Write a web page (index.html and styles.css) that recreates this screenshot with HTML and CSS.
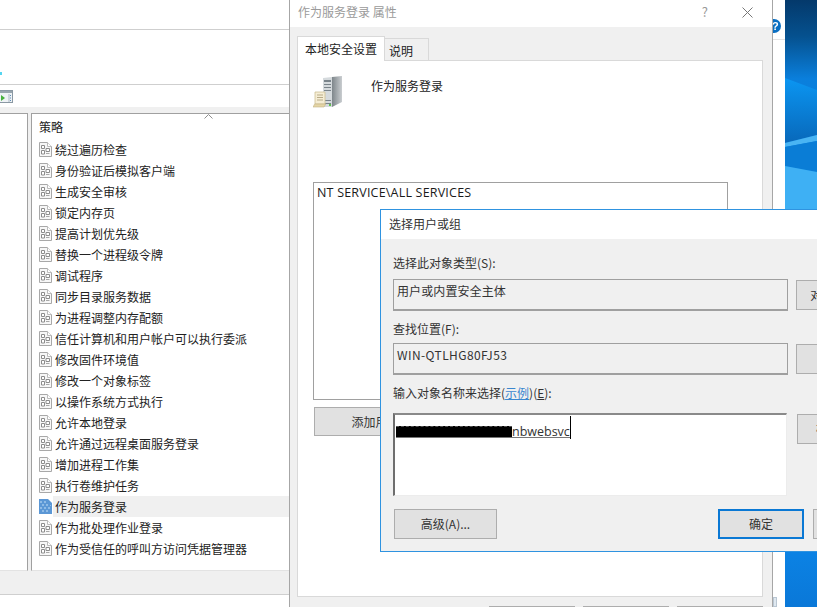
FILE: index.html
```html
<!DOCTYPE html>
<html lang="zh-CN">
<head>
<meta charset="utf-8">
<title>作为服务登录 属性</title>
<link rel="stylesheet" href="styles.css">
</head>
<body>
<svg class="defs" width="0" height="0" aria-hidden="true">
  <symbol id="policy" viewBox="0 0 13 15">
    <path d="M.5.5h8l4 4v10H.5z" fill="#f7f7f7" stroke="#a8a8a8"/>
    <path d="M8.5.5v4h4" fill="#fff" stroke="#bbb"/>
    <path d="M2.5 3.5h3v3h-3zM7 6.5h3.5v3H7zM2.5 8.5h3v3.500h-3z" fill="#fff" stroke="#8c8c8c"/>
    <path d="M7 11.500h3.500" stroke="#a8a8a8"/>
  </symbol>
</svg>

<div class="desktop">
  <svg class="wallpaper" viewBox="0 0 32 607" preserveAspectRatio="none" aria-hidden="true">
    <defs>
      <linearGradient id="wp" x1="0" y1="0" x2="0" y2="1">
        <stop offset="0" stop-color="#04396b"/>
        <stop offset=".06" stop-color="#05518f"/>
        <stop offset=".13" stop-color="#0a7fdc"/>
        <stop offset=".4" stop-color="#0a86e6"/>
        <stop offset=".91" stop-color="#0b82e4"/>
        <stop offset="1" stop-color="#0a78d8"/>
      </linearGradient>
      <linearGradient id="ray" x1="0" y1="0" x2="0" y2="1">
        <stop offset="0" stop-color="#0b96f2"/>
        <stop offset="1" stop-color="#0868ba"/>
      </linearGradient>
    </defs>
    <rect width="32" height="607" fill="url(#wp)"/>
    <path d="M0 78L32 90V135L0 143Z" fill="url(#ray)"/>
    <path d="M0 143L32 135V141L0 147Z" fill="#49b4f3"/>
    <path d="M0 147L32 141V172L0 166Z" fill="#0a7dd6"/>
    <path d="M0 166L32 172V209H0Z" fill="#3eb0f4"/>
  </svg>
</div>

<section class="console">
  <div class="console-top"></div>
  <div class="console-nav"><span class="nav-mark"></span></div>
  <div class="console-toolbar">
    <svg class="tool-icon" viewBox="0 0 13 13" aria-hidden="true">
      <rect x="-1" y=".5" width="13.500" height="12" fill="#eef2f5" stroke="#8a98a3"/>
      <rect x="0" y="1" width="12" height="2" fill="#98a5ae"/>
      <path d="M1 5l4 3-4 3z" fill="#45b03c"/>
      <path d="M9 4v8" stroke="#aab8c4"/>
      <path d="M10.500 5v1M10.500 7.500v1M10.500 10v1" stroke="#5f8fb8"/>
    </svg>
  </div>
  <div class="console-panes">
    <div class="tree-pane"></div>
    <div class="list-pane">
      <div class="list-head">
        <span>策略</span>
        <svg class="sort" viewBox="0 0 9 5" aria-hidden="true"><path d="M.5 4.500l4-4 4 4" fill="none" stroke="#8e8e8e"/></svg>
      </div>
      <ul class="policies">
        <li><svg class="pi"><use href="#policy"/></svg>绕过遍历检查</li>
        <li><svg class="pi"><use href="#policy"/></svg>身份验证后模拟客户端</li>
        <li><svg class="pi"><use href="#policy"/></svg>生成安全审核</li>
        <li><svg class="pi"><use href="#policy"/></svg>锁定内存页</li>
        <li><svg class="pi"><use href="#policy"/></svg>提高计划优先级</li>
        <li><svg class="pi"><use href="#policy"/></svg>替换一个进程级令牌</li>
        <li><svg class="pi"><use href="#policy"/></svg>调试程序</li>
        <li><svg class="pi"><use href="#policy"/></svg>同步目录服务数据</li>
        <li><svg class="pi"><use href="#policy"/></svg>为进程调整内存配额</li>
        <li><svg class="pi"><use href="#policy"/></svg>信任计算机和用户帐户可以执行委派</li>
        <li><svg class="pi"><use href="#policy"/></svg>修改固件环境值</li>
        <li><svg class="pi"><use href="#policy"/></svg>修改一个对象标签</li>
        <li><svg class="pi"><use href="#policy"/></svg>以操作系统方式执行</li>
        <li><svg class="pi"><use href="#policy"/></svg>允许本地登录</li>
        <li><svg class="pi"><use href="#policy"/></svg>允许通过远程桌面服务登录</li>
        <li><svg class="pi"><use href="#policy"/></svg>增加进程工作集</li>
        <li><svg class="pi"><use href="#policy"/></svg>执行卷维护任务</li>
        <li class="selected"><svg class="pi" viewBox="0 0 13 15" aria-hidden="true"><path d="M0 0h9l4 4v11H0z" fill="#5b97d5"/><path d="M1 2h2v2H1zM5 2h2v2H5zM3 5h2v2H3zM7 5h2v2H7zM11 6h1v1h-1zM1 8h2v2H1zM5 8h2v2H5zM9 8h2v2H9zM3 11h2v2H3zM7 11h2v2H7z" fill="#8fbbe6"/></svg>作为服务登录</li>
        <li><svg class="pi"><use href="#policy"/></svg>作为批处理作业登录</li>
        <li><svg class="pi"><use href="#policy"/></svg>作为受信任的呼叫方访问凭据管理器</li>
      </ul>
    </div>
  </div>
  <div class="console-status"></div>
</section>

<section class="backstrip">
  <span class="help-badge">?</span>
  <span class="strip-line"></span>
  <span class="strip-mark"></span>
</section>

<section class="props">
  <header class="props-title">
    <span>作为服务登录 属性</span>
    <span class="props-controls">
      <span class="qmark">?</span>
      <svg class="close" viewBox="0 0 11 11" aria-hidden="true"><path d="M.5.5l10 10M10.500.5l-10 10" stroke="#777" fill="none"/></svg>
    </span>
  </header>
  <div class="props-body">
    <div class="tabs">
      <span class="tab tab-active">本地安全设置</span>
      <span class="tab">说明</span>
    </div>
    <div class="tab-pane">
      <div class="policy-head">
        <svg class="server" viewBox="0 0 30 32" aria-hidden="true">
          <defs>
            <linearGradient id="srv" x1="0" x2="1"><stop offset="0" stop-color="#7e868b"/><stop offset="1" stop-color="#c9cdd0"/></linearGradient>
          </defs>
          <path d="M10 2l9-1v30h-9z" fill="#d5dadd"/>
          <path d="M19 1l10-1v26l-10 5z" fill="url(#srv)"/>
          <path d="M11 4h7v2h-7zM11 8h7v1h-7zM11 11h7v1h-7zM11 14h7v1h-7zM12 24h6v1h-6zM12 27h6v1h-6z" fill="#7a848b"/>
          <rect x="16" y="28" width="2" height="2" fill="#5ec14b"/>
          <path d="M2 16h10v12H2z" fill="#f5edd4" stroke="#cdbf96" stroke-width=".8"/>
          <path d="M4 19h6M4 21.500h6M4 24h6" stroke="#b8ab88"/>
          <path d="M0 31c1-1 1-3 2-3h11c-1 0-1 2-2 3z" fill="#e4d5a6" stroke="#c3b283" stroke-width=".6"/>
        </svg>
        <span class="policy-name">作为服务登录</span>
      </div>
      <div class="accounts">NT SERVICE\ALL SERVICES</div>
      <div class="btn add-btn">添加用户或组(U)...</div>
    </div>
    <div class="props-buttons">
      <span class="btn"></span><span class="btn"></span><span class="btn"></span>
    </div>
  </div>
</section>

<section class="picker">
  <header class="picker-title">选择用户或组</header>
  <div class="picker-body">
    <label class="lbl lbl-first">选择此对象类型(S):</label>
    <div class="row">
      <div class="field">用户或内置安全主体</div>
      <div class="btn side-btn">对象类型(T)...</div>
    </div>
    <label class="lbl">查找位置(F):</label>
    <div class="row row-second">
      <div class="field">WIN-QTLHG80FJ53</div>
      <div class="btn side-btn">位置(L)...</div>
    </div>
    <label class="lbl lbl-input">输入对象名称来选择(<a class="sample">示例</a>)(<u>E</u>):</label>
    <div class="row row-input">
      <div class="name-input">
        <span class="redacted"></span><span class="typed">nbwebsvc</span><span class="caret"></span>
      </div>
      <div class="btn side-btn">检查名称(C)</div>
    </div>
    <div class="row row-foot">
      <div class="btn adv-btn">高级(A)...</div>
      <div class="btn ok-btn">确定</div>
      <div class="btn cancel-btn">取消</div>
    </div>
  </div>
</section>
</body>
</html>
```

FILE: styles.css
```css
* { box-sizing: border-box; }
html, body { margin: 0; padding: 0; }
body {
  position: relative;
  width: 817px;
  height: 607px;
  overflow: hidden;
  background: #fff;
  color: #222;
  font: 12px/16px "Noto Sans CJK SC", "Noto Sans", sans-serif;
  filter: blur(.35px);
}
.defs { position: absolute; }

.desktop { position: absolute; left: 785px; top: 0; width: 32px; height: 607px; }
.wallpaper { display: block; width: 100%; height: 100%; }

/* console window */
.console {
  position: absolute; left: 0; top: 0; width: 290px; height: 607px;
  display: flex; flex-direction: column;
  background: #fff;
  border-right: 1px solid #a6a6a6;
}
.console-top { height: 30px; border-bottom: 1px solid #cfcfcf; flex: none; }
.console-nav { height: 55px; border-bottom: 1px solid #cfcfcf; flex: none; position: relative; }
.nav-mark { position: absolute; left: 0; top: 42px; width: 2px; height: 3px; background: #55d5f0; }
.console-toolbar { height: 22px; flex: none; display: flex; align-items: center; padding-top: 1px; }
.tool-icon { width: 13px; height: 13px; }
.console-panes {
  flex: none; height: 464px; display: flex; gap: 3px;
  background: #f0f0f0; padding-top: 6px;
}
.tree-pane {
  width: 28px; background: #fff;
  border-top: 1px solid #a0a0a0; border-right: 1px solid #a0a0a0;
  border-bottom: 1px solid #e3e3e3;
}
.list-pane {
  flex: 1; background: #fff;
  border-top: 1px solid #a0a0a0; border-left: 1px solid #a0a0a0;
  border-bottom: 1px solid #e3e3e3;
}
.list-head {
  position: relative; height: 25px; padding: 5px 0 0 7px;
  font-size: 12px; color: #222;
}
.sort { position: absolute; left: 172px; top: 0; width: 9px; height: 5px; }
.policies { list-style: none; margin: 0; padding: 0; }
.policies li {
  height: 21px; display: flex; align-items: center;
  padding-left: 7px; color: #222; white-space: nowrap;
}
.pi { width: 13px; height: 15px; margin-right: 3px; flex: none; }
.policies .selected { background: linear-gradient(#f0f0f0, #f0f0f0) 21px 0 no-repeat; }
.console-status { flex: none; height: 24px; background: #f0f0f0; border-bottom: 1px solid #cfcfcf; }

/* piece of window behind */
.backstrip { position: absolute; left: 772px; top: 0; width: 13px; height: 607px; background: #fff; }
.help-badge {
  position: absolute; left: 0; top: 19px; width: 9px; height: 14px;
  border-radius: 0 7px 7px 0; background: #0a6fc2; color: #fff;
  font: bold 11px/14px "Liberation Sans", sans-serif;
}
.strip-line { position: absolute; left: 0; right: 0; top: 39px; height: 1px; background: #e4e4e4; }
.strip-mark {
  position: absolute; left: 1px; top: 597px; width: 4px; height: 10px;
  background: #dfe8f0; border: 1px solid #b9c6d2;
}

/* properties dialog */
.props {
  position: absolute; left: 290px; top: 0; width: 483px; height: 607px;
  border-right: 1px solid #a6a6a6; background: #f0f0f0;
  display: flex; flex-direction: column;
}
.props-title {
  height: 27px; flex: none; background: #fff; color: #9a9a9a;
  display: flex; justify-content: space-between; align-items: center;
  padding: 0 19px 3px 8px;
}
.props-controls { display: flex; align-items: center; gap: 34px; }
.qmark { color: #999; font-size: 13px; }
.close { width: 11px; height: 11px; display: block; }
.props-body { flex: 1; padding: 9px 9px 0 7px; }
.tabs { display: flex; align-items: flex-end; height: 25px; position: relative; z-index: 1; margin-bottom: -1px; }
.tab {
  height: 23px; width: 44px; padding: 2px 0 0 4px; background: #f0f0f0;
  border: 1px solid #d9d9d9; border-left: 0; color: #222; line-height: 20px;
}
.tabs .tab-active {
  height: 25px; width: 88px; background: #fff; border: 1px solid #d9d9d9; border-bottom: 0;
  padding: 1px 0 0 7px; line-height: 22px;
}
.tab-pane {
  height: 537px; background: #fff; border: 1px solid #d9d9d9;
  padding: 0 15px; display: flex; flex-direction: column;
}
.policy-head { height: 121px; display: flex; align-items: flex-start; padding-top: 15px; }
.server { width: 30px; height: 32px; margin-right: 28px; flex: none; }
.policy-name { padding-top: 2px; color: #222; }
.accounts {
  width: 415px; height: 218px; background: #fff;
  border: 1px solid #a0a0a0; padding: 1px 3px;
  color: #1a1a1a; font: 12.5px/17px "Open Sans", sans-serif; letter-spacing: .2px;
}
.btn {
  background: #e1e1e1; border: 1px solid #adadad; color: #333;
  display: flex; align-items: center; justify-content: center; white-space: nowrap;
}
.add-btn { width: 174px; height: 29px; margin: 7px 0 0 1px; }
.props-buttons { display: flex; gap: 8px; justify-content: flex-end; padding: 9px 0 0 0; }
.props-buttons .btn { width: 86px; height: 23px; }

/* select users dialog */
.picker {
  position: absolute; left: 380px; top: 209px; width: 460px; height: 343px;
  border: 1px solid #2f93e0; background: #f0f0f0;
  display: flex; flex-direction: column;
}
.picker-title {
  height: 29px; flex: none; background: #fff; color: #333;
  padding: 6px 0 0 8px;
}
.picker-body { flex: 1; padding: 0 12px; display: flex; flex-direction: column; }
.lbl { display: block; color: #333; margin-top: 10px; height: 16px; }
.lbl-first { margin-top: 16px; }
.row { display: flex; gap: 8px; margin-top: 8px; flex: none; }
.row-second { margin-top: 6px; }
.field {
  width: 395px; height: 32px; background: #f0f0f0;
  border: 1px solid #9f9f9f; border-width: 1.5px 1.5px 2px 1.5px; padding: 3px 3px; color: #333; flex: none;
}
.field:first-child { letter-spacing: .1px; }
.row-second .field { letter-spacing: .42px; }
.side-btn { width: 102px; height: 30px; margin-top: 1px; flex: none; }
.sample { color: #3a86cf; text-decoration: underline; }
.row-input { margin-top: 12px; height: 82px; gap: 10px; }
.name-input {
  width: 394px; height: 83px; background: #fff; flex: none;
  border-style: solid; border-width: 2px 1px 1px 2px;
  border-color: #8a8a8a #ececec #ececec #6e6e6e;
  padding: 1px 0 0 1px; display: flex; align-items: flex-start;
}
.redacted {
  width: 116px; height: 12px; margin-top: 10px; background: #000; flex: none;
  border-top: 1px dashed #555; border-bottom: 1px solid #777;
}
.typed {
  color: #333; font: 12.5px/16px "Open Sans", sans-serif;
  border-bottom: 1px solid #777; height: 14px; margin-top: 8px;
}
.caret { width: 1px; height: 23px; background: #000; }
.row-foot { gap: 0; margin-top: 14px; padding-left: 1px; }
.adv-btn { width: 103px; height: 30px; margin-right: 221px; flex: none; }
.ok-btn { width: 86px; height: 30px; background: #e1e1e1; border: 2px solid #0a78d4; margin-right: 9px; flex: none; }
.cancel-btn { width: 86px; height: 30px; flex: none; }
```
